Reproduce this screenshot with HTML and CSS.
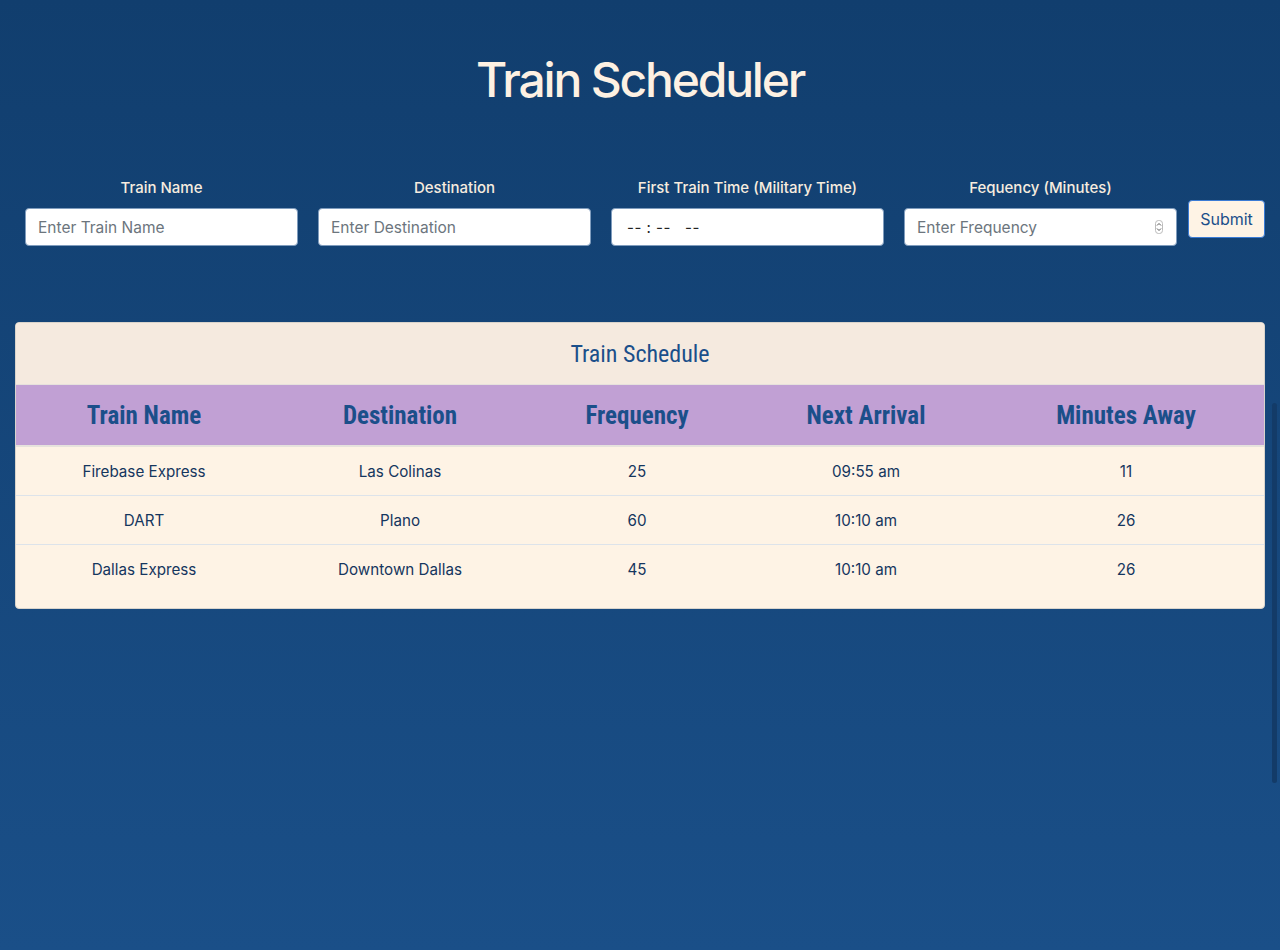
FILE: index.html
```html
<!DOCTYPE html>
<html lang="en">
<head>
<meta charset="utf-8">
<title>Train Scheduler</title>
<link rel="stylesheet" href="styles.css">
</head>
<body>
<div class="page">
  <h1 class="title">Train Scheduler</h1>
  <form class="form-row">
    <div class="field">
      <label>Train Name</label>
      <div class="input"><span class="ph">Enter Train Name</span></div>
    </div>
    <div class="field">
      <label>Destination</label>
      <div class="input"><span class="ph">Enter Destination</span></div>
    </div>
    <div class="field">
      <label>First Train Time (Military Time)</label>
      <div class="input time"><span>-- : --&nbsp;&nbsp;&nbsp;--</span></div>
    </div>
    <div class="field">
      <label>Fequency (Minutes)</label>
      <div class="input number"><span class="ph">Enter Frequency</span>
        <svg class="spin" width="8" height="14" viewBox="0 0 8 14"><rect x="0.5" y="0.5" width="7" height="13" rx="3" fill="#fff" stroke="#bbb"/><path d="M2 5.5 L4 3.5 L6 5.5 M2 8.5 L4 10.5 L6 8.5" fill="none" stroke="#555" stroke-width="1"/></svg>
      </div>
    </div>
    <button type="button" class="submit">Submit</button>
  </form>

  <section class="card">
    <div class="card-header">Train Schedule</div>
    <table class="schedule">
      <colgroup>
        <col style="width:256px"><col style="width:256px"><col style="width:218px"><col style="width:240px"><col style="width:280px">
      </colgroup>
      <thead>
        <tr><th>Train Name</th><th>Destination</th><th>Frequency</th><th>Next Arrival</th><th>Minutes Away</th></tr>
      </thead>
      <tbody>
        <tr><td>Firebase Express</td><td>Las Colinas</td><td>25</td><td>09:55 am</td><td>11</td></tr>
        <tr><td>DART</td><td>Plano</td><td>60</td><td>10:10 am</td><td>26</td></tr>
        <tr><td>Dallas Express</td><td>Downtown Dallas</td><td>45</td><td>10:10 am</td><td>26</td></tr>
      </tbody>
    </table>
  </section>
</div>
<div class="scroll-track"></div>
</body>
</html>
```
FILE: styles.css
```css
html, body {
  margin: 0;
  height: 100%;
}
body {
  background: linear-gradient(to bottom, #113e6e 0%, #1a4f88 100%);
  font-family: Inter, "Helvetica Neue", "Liberation Sans", sans-serif;
  color: #0f3460;
  min-height: 950px;
  position: relative;
  overflow: hidden;
}
.page {
  padding: 0 15px;
}
.title {
  margin: 0;
  padding-top: 50px;
  height: 60px;
  text-align: center;
  font-size: 48px;
  font-weight: 500;
  line-height: 60px;
  letter-spacing: -2.2px;
  color: #fdf1e3;
}
.form-row {
  display: flex;
  align-items: flex-start;
  margin-top: 69px;
}
.field {
  width: 293px;
  padding: 0 10px;
  box-sizing: border-box;
  display: flex;
  flex-direction: column;
  align-items: center;
}
.field label {
  font-size: 15px;
  font-weight: 500;
  color: #f7ecdf;
  line-height: 18px;
  height: 20px;
  margin-bottom: 9px;
}
.input {
  width: 100%;
  height: 38px;
  box-sizing: border-box;
  background: #fff;
  border: 1px solid #7f9cbd;
  border-radius: 4px;
  display: flex;
  align-items: center;
  padding: 0 12px;
  font-size: 15.5px;
  color: #6c757d;
}
.input.time {
  color: #222;
  padding-left: 15px;
  letter-spacing: 0.5px;
  font-size: 15px;
}
.input.number {
  justify-content: space-between;
  padding-right: 13px;
}
.spin { display: block; }
.submit {
  margin-top: 21px;
  margin-left: 1px;
  height: 38px;
  width: 77px;
  background: #fef3e5;
  border: 1px solid #3a7bd5;
  border-radius: 4px;
  color: #1b4f8a;
  font-family: Inter, "Helvetica Neue", "Liberation Sans", sans-serif;
  font-size: 16px;
  padding: 0;
}
.card {
  margin-top: 76px;
  background: #fef3e5;
  border: 1px solid #d9d4cc;
  border-radius: 4px;
  overflow: hidden;
  padding-bottom: 15px;
}
.card-header {
  height: 61px;
  background: #f5eadf;
  border-bottom: 1px solid #e6e2dc;
  display: flex;
  align-items: center;
  justify-content: center;
  font-family: "Roboto Condensed", "DejaVu Sans Condensed", Roboto, sans-serif;
  font-stretch: condensed;
  font-size: 24px;
  color: #1b4f8a;
}
.schedule {
  width: 100%;
  border-collapse: collapse;
  table-layout: fixed;
}
.schedule th {
  background: #c1a0d4;
  height: 60px;
  padding: 0;
  border-bottom: 2px solid #e6e2dc;
  font-family: "Roboto Condensed", Roboto, sans-serif;
  font-weight: 700;
  font-size: 25px;
  color: #1b4f8a;
  text-align: center;
}
.schedule td {
  height: 48px;
  padding: 0;
  text-align: center;
  font-size: 15.2px;
  color: #15365e;
  border-top: 1px solid #dde3ea;
}
.schedule tbody tr:first-child td {
  border-top: none;
}
.scroll-track {
  position: absolute;
  left: 1272px;
  top: 403px;
  width: 5px;
  height: 380px;
  border-radius: 3px;
  background: #133b68;
}
```
